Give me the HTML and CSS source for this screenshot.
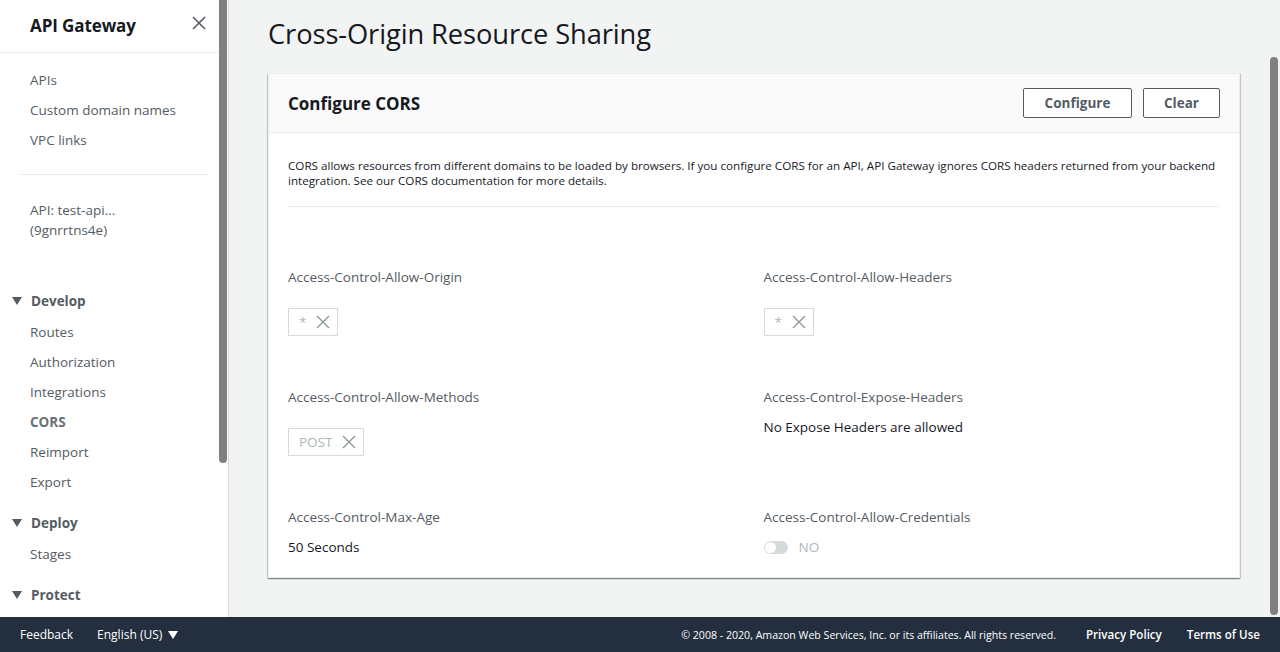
FILE: index.html
```html
<!DOCTYPE html>
<html lang="en">
<head>
<meta charset="utf-8">
<title>Cross-Origin Resource Sharing</title>
<link rel="stylesheet" href="styles.css">
</head>
<body>
<div class="app">
  <aside class="sidebar">
    <div class="side-head">
      <span class="side-title">API Gateway</span>
      <svg class="close" width="14" height="14" viewBox="0 0 14 14"><path d="M1 1L13 13M13 1L1 13" stroke="#545b64" stroke-width="1.6" fill="none"/></svg>
    </div>
    <ul class="nav top">
      <li>APIs</li>
      <li>Custom domain names</li>
      <li>VPC links</li>
    </ul>
    <div class="side-div"></div>
    <div class="api-name">API: test-api...<br>(9gnrrtns4e)</div>
    <div class="section first">
      <div class="sec-head"><span class="tri"></span>Develop</div>
      <ul class="nav">
        <li>Routes</li>
        <li>Authorization</li>
        <li>Integrations</li>
        <li class="active">CORS</li>
        <li>Reimport</li>
        <li>Export</li>
      </ul>
    </div>
    <div class="section">
      <div class="sec-head"><span class="tri"></span>Deploy</div>
      <ul class="nav">
        <li>Stages</li>
      </ul>
    </div>
    <div class="section">
      <div class="sec-head"><span class="tri"></span>Protect</div>
    </div>
    <div class="thumb side-thumb"></div>
  </aside>
  <main class="main">
    <h1 class="page-title">Cross-Origin Resource Sharing</h1>
    <section class="card">
      <header class="card-head">
        <h2>Configure CORS</h2>
        <div class="actions">
          <button class="btn btn-configure">Configure</button>
          <button class="btn btn-clear">Clear</button>
        </div>
      </header>
      <div class="card-body">
        <p class="desc">CORS allows resources from different domains to be loaded by browsers. If you configure CORS for an API, API Gateway ignores CORS headers returned from your backend integration. See our CORS documentation for more details.</p>
        <div class="grid">
          <div class="field">
            <div class="label">Access-Control-Allow-Origin</div>
            <div class="tokens"><span class="token">*<svg class="x" width="14" height="14" viewBox="0 0 14 14"><path d="M1 1L13 13M13 1L1 13" stroke="#879596" stroke-width="1.3" fill="none"/></svg></span></div>
          </div>
          <div class="field">
            <div class="label">Access-Control-Allow-Headers</div>
            <div class="tokens"><span class="token">*<svg class="x" width="14" height="14" viewBox="0 0 14 14"><path d="M1 1L13 13M13 1L1 13" stroke="#879596" stroke-width="1.3" fill="none"/></svg></span></div>
          </div>
          <div class="field">
            <div class="label">Access-Control-Allow-Methods</div>
            <div class="tokens"><span class="token">POST<svg class="x" width="14" height="14" viewBox="0 0 14 14"><path d="M1 1L13 13M13 1L1 13" stroke="#879596" stroke-width="1.3" fill="none"/></svg></span></div>
          </div>
          <div class="field">
            <div class="label">Access-Control-Expose-Headers</div>
            <div class="value">No Expose Headers are allowed</div>
          </div>
          <div class="field">
            <div class="label">Access-Control-Max-Age</div>
            <div class="value">50 Seconds</div>
          </div>
          <div class="field">
            <div class="label">Access-Control-Allow-Credentials</div>
            <div class="value toggle-row"><span class="toggle"><span class="knob"></span></span><span class="no">NO</span></div>
          </div>
        </div>
      </div>
    </section>
    <div class="thumb main-thumb"></div>
  </main>
</div>
<footer class="footer">
  <div class="foot-left">
    <span>Feedback</span>
    <span class="lang">English (US) <span class="ftri"></span></span>
  </div>
  <div class="foot-right">
    <span class="copy">© 2008 - 2020, Amazon Web Services, Inc. or its affiliates. All rights reserved.</span>
    <span class="flink">Privacy Policy</span>
    <span class="flink">Terms of Use</span>
  </div>
</footer>
</body>
</html>
```

FILE: styles.css
```css
* { box-sizing: border-box; }
html, body { margin: 0; padding: 0; }
body {
  width: 1280px;
  height: 652px;
  overflow: hidden;
  font-family: "Open Sans", "Noto Sans", sans-serif;
  color: #16191f;
  background: #f2f3f3;
  display: flex;
  flex-direction: column;
}
.app {
  display: flex;
  height: 617px;
}
ul { list-style: none; margin: 0; padding: 0; }

/* Sidebar */
.sidebar {
  position: relative;
  width: 229px;
  flex: none;
  background: #fff;
  border-right: 1px solid #d5dbdb;
}
.side-head {
  height: 53px;
  border-bottom: 1px solid #eaeded;
  margin-right: 9px;
  display: flex;
  align-items: center;
  justify-content: space-between;
  padding: 0 13px 2px 30px;
}
.side-title {
  font-size: 17px;
  font-weight: 700;
  color: #16191f;
  letter-spacing: -0.1px;
}
.close { margin-top: -4px; }
.nav li {
  height: 30px;
  line-height: 30px;
  padding-left: 30px;
  font-size: 13.5px;
  color: #545b64;
}
.nav.top { padding-top: 12px; }
.section .nav { padding-top: 1px; }
.nav li.active { font-weight: 700; color: #687078; }
.side-div {
  height: 1px;
  background: #eaeded;
  margin: 19px 20px 0 20px;
}
.api-name {
  padding: 25px 0 0 30px;
  font-size: 13.5px;
  line-height: 20px;
  color: #545b64;
}
.section { margin-top: 11px; }
.section.first { margin-top: 46px; }
.sec-head {
  height: 30px;
  line-height: 30px;
  font-size: 13.5px;
  font-weight: 700;
  color: #545b64;
  display: flex;
  align-items: center;
  padding-left: 12px;
}
.tri {
  width: 0; height: 0;
  border-left: 5px solid transparent;
  border-right: 5px solid transparent;
  border-top: 8px solid #545b64;
  margin-right: 9px;
}
.thumb {
  position: absolute;
  width: 8px;
  background: #7f7f7f;
  border-radius: 4px;
}
.side-thumb { left: 219px; top: 0; height: 463px; border-radius: 0 0 4px 4px; }

/* Main */
.main {
  position: relative;
  flex: 1;
  padding: 0 40px 0 39px;
}
.page-title {
  margin: 0;
  height: 73px;
  padding-top: 14px;
  font-size: 27.3px;
  font-weight: 400;
  line-height: 40px;
  color: #16191f;
  letter-spacing: -0.1px;
}
.card {
  background: #fff;
  border: 1px solid #eaeded;
  box-shadow: 0 1px 1px 0 rgba(0,28,36,0.3), 1px 1px 1px 0 rgba(0,28,36,0.15), -1px 1px 1px 0 rgba(0,28,36,0.15);
}
.card-head {
  height: 59px;
  background: #fafafa;
  border-bottom: 1px solid #eaeded;
  display: flex;
  align-items: center;
  justify-content: space-between;
  padding: 0 19px 0 19px;
}
.card-head h2 {
  margin: 0;
  font-size: 17px;
  font-weight: 700;
  color: #16191f;
}
.actions { display: flex; gap: 11px; margin-top: -1px; }
.btn {
  height: 30px;
  border: 1px solid #545b64;
  background: #fff;
  border-radius: 2px;
  font-family: inherit;
  font-size: 13.5px;
  font-weight: 700;
  color: #545b64;
  padding: 0 20px;
}
.btn-configure { width: 109px; }
.btn-clear { width: 77px; }
.card-body { padding: 25px 20px 20px 19px; }
.desc {
  margin: 0;
  font-size: 11.65px;
  line-height: 15px;
  color: #16191f;
  padding-bottom: 18px;
  border-bottom: 1px solid #eaeded;
}
.grid {
  display: grid;
  grid-template-columns: 1fr 1fr;
  column-gap: 20px;
  grid-template-rows: 100px 100px auto;
  row-gap: 20px;
  margin-top: 60px;
}
.label {
  font-size: 13.5px;
  line-height: 20px;
  color: #545b64;
}
.value {
  margin-top: 10px;
  font-size: 13.5px;
  line-height: 20px;
  color: #16191f;
}
.tokens { margin-top: 21px; display: flex; }
.token {
  height: 28px;
  border: 1px solid #d5dbdb;
  display: inline-flex;
  align-items: center;
  padding: 0 7px 0 10px;
  gap: 10px;
  font-size: 13.5px;
  color: #aab7b8;
}
.toggle-row { display: flex; align-items: center; gap: 11px; }
.toggle {
  width: 24px;
  height: 13px;
  border-radius: 7px;
  background: #d5dbdb;
  position: relative;
  display: inline-block;
}
.knob {
  position: absolute;
  left: 1px; top: 1px;
  width: 11px; height: 11px;
  border-radius: 50%;
  background: #fff;
}
.no { color: #aab7b8; }
.main-thumb { right: 2px; top: 57px; height: 558px; }

/* Footer */
.footer {
  height: 35px;
  background: #232f3e;
  color: #fff;
  font-size: 12px;
  display: flex;
  align-items: center;
  justify-content: space-between;
  padding: 0 20px 0 20px;
}
.foot-left { display: flex; gap: 24px; align-items: center; }
.lang { display: inline-flex; align-items: center; gap: 6px; }
.ftri {
  width: 0; height: 0;
  border-left: 5px solid transparent;
  border-right: 5px solid transparent;
  border-top: 8px solid #fff;
}
.foot-right { display: flex; align-items: center; gap: 25px; }
.copy { font-size: 10.6px; margin-right: 5px; }
.flink { font-weight: 600; font-size: 11.6px; }
```
